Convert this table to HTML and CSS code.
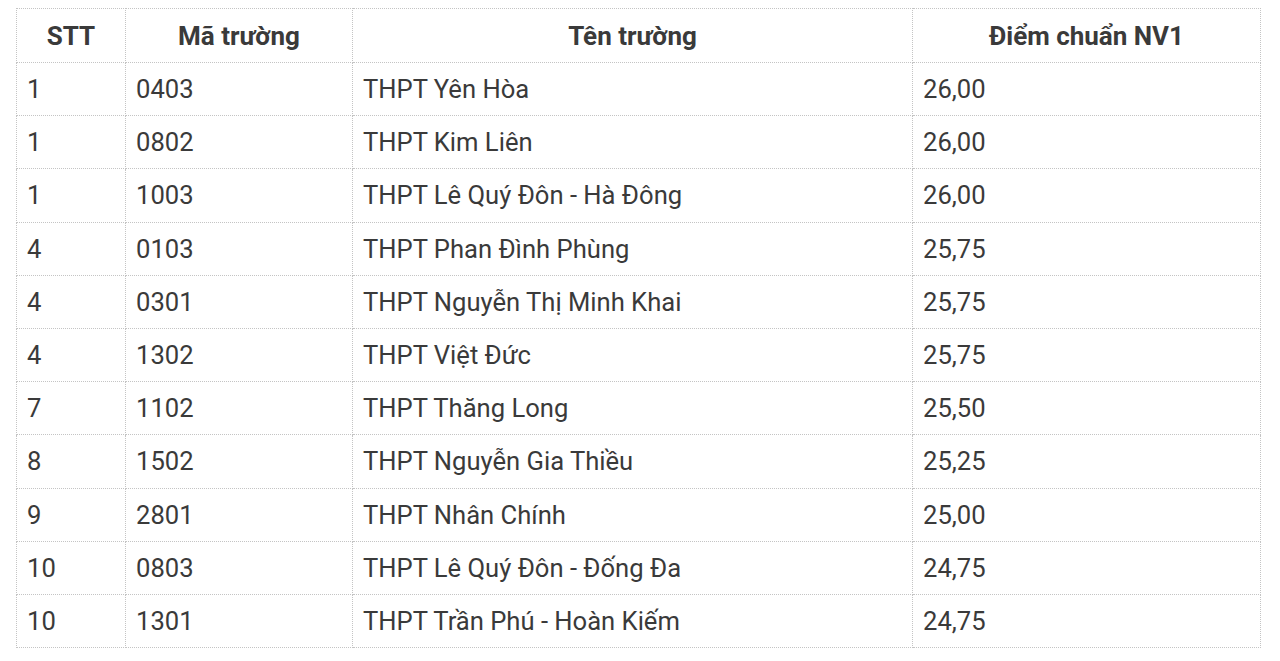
FILE: index.html
```html
<!DOCTYPE html>
<html lang="vi">
<head>
<meta charset="utf-8">
<link rel="stylesheet" href="styles.css">
</head>
<body>
<table class="scores">
  <colgroup>
    <col class="c1"><col class="c2"><col class="c3"><col class="c4">
  </colgroup>
  <thead>
    <tr><th>STT</th><th>Mã trường</th><th>Tên trường</th><th>Điểm chuẩn NV1</th></tr>
  </thead>
  <tbody>
    <tr><td>1</td><td>0403</td><td>THPT Yên Hòa</td><td>26,00</td></tr>
    <tr><td>1</td><td>0802</td><td>THPT Kim Liên</td><td>26,00</td></tr>
    <tr><td>1</td><td>1003</td><td>THPT Lê Quý Đôn - Hà Đông</td><td>26,00</td></tr>
    <tr><td>4</td><td>0103</td><td>THPT Phan Đình Phùng</td><td>25,75</td></tr>
    <tr><td>4</td><td>0301</td><td>THPT Nguyễn Thị Minh Khai</td><td>25,75</td></tr>
    <tr><td>4</td><td>1302</td><td>THPT Việt Đức</td><td>25,75</td></tr>
    <tr><td>7</td><td>1102</td><td>THPT Thăng Long</td><td>25,50</td></tr>
    <tr><td>8</td><td>1502</td><td>THPT Nguyễn Gia Thiều</td><td>25,25</td></tr>
    <tr><td>9</td><td>2801</td><td>THPT Nhân Chính</td><td>25,00</td></tr>
    <tr><td>10</td><td>0803</td><td>THPT Lê Quý Đôn - Đống Đa</td><td>24,75</td></tr>
    <tr><td>10</td><td>1301</td><td>THPT Trần Phú - Hoàn Kiếm</td><td>24,75</td></tr>
  </tbody>
</table>
</body>
</html>
```
FILE: styles.css
```css
html, body {
  margin: 0;
  background: #ffffff;
}
body {
  padding: 8px 16px;
  font-family: Roboto, "Noto Sans", sans-serif;
  color: #3a3a3a;
}
.scores {
  width: 1244px;
  border-collapse: collapse;
  table-layout: fixed;
  font-size: 25.6px;
}
.c1 { width: 109px; }
.c2 { width: 227px; }
.c3 { width: 560px; }
.c4 { width: 348px; }
.scores th,
.scores td {
  border: 1px dotted #c4c4c4;
  padding: 0 10px;
  vertical-align: middle;
  line-height: 30px;
}
.scores th {
  height: 53px;
  font-size: 26px;
  font-weight: 700;
  text-align: center;
}
.scores td {
  height: 52.2px;
  font-weight: 400;
  text-align: left;
}
```
